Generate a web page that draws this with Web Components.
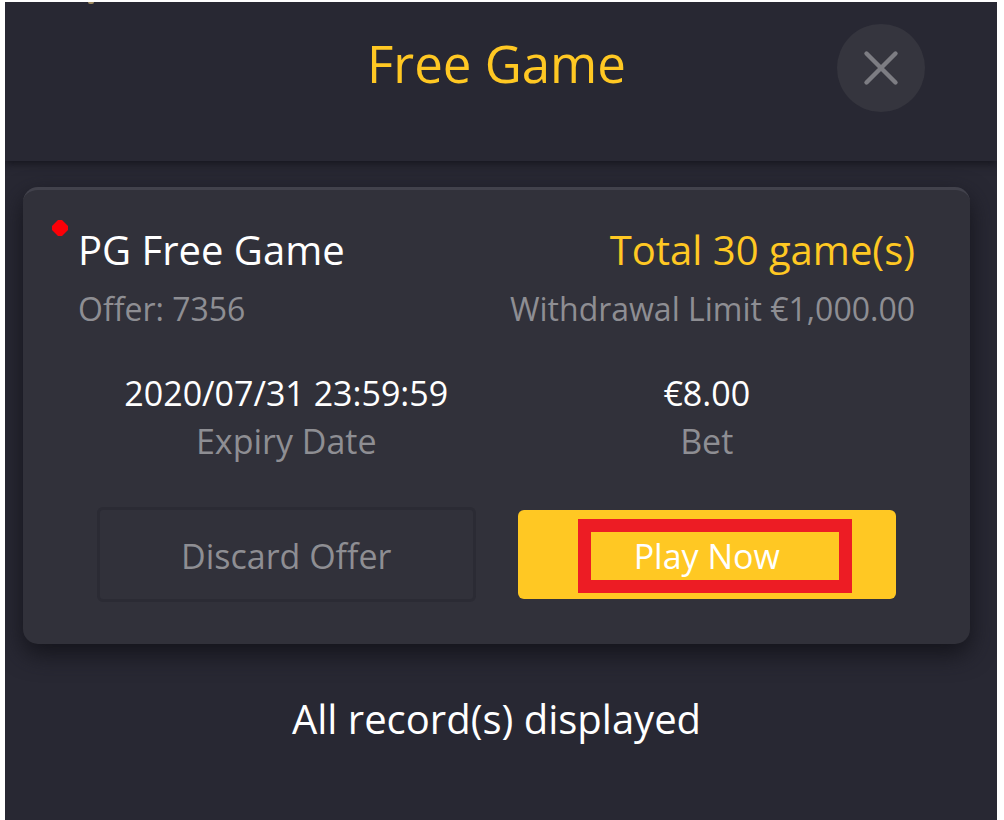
<!DOCTYPE html>
<html lang="en">
<head>
    <meta charset="utf-8">
    <title>Free Game</title>
    <style>
        html {
            height: 100%;
            background-color: #ffffff;
        }

        body {
            box-sizing: border-box;
            min-height: 100%;
            margin: 0;
            padding: 2px 7px 0 5px;
            display: flex;
            font-family: 'Open Sans', 'Noto Sans', sans-serif;
            color: #ffffff;
        }
    </style>
</head>
<body>
    <game-dialog>
        <dialog-header slot="header">Free Game</dialog-header>
        <offer-card>
            <span slot="name">PG Free Game</span>
            <span slot="total">Total 30 game(s)</span>
            <span slot="offer">Offer: 7356</span>
            <span slot="limit">Withdrawal Limit €1,000.00</span>
            <offer-stat slot="stats" label="Expiry Date">2020/07/31 23:59:59</offer-stat>
            <offer-stat slot="stats" label="Bet">€8.00</offer-stat>
            <offer-button slot="actions">Discard Offer</offer-button>
            <offer-button slot="actions" primary>Play Now</offer-button>
        </offer-card>
        <span slot="footer">All record(s) displayed</span>
    </game-dialog>

    <script>
        const dialogTemplate = `
            <style>
                :host {
                    flex: 1;
                    display: block;
                    position: relative;
                    overflow: hidden;
                    background-color: #282833;
                }

                /* tail of the page that sits behind the dialog */
                .behind {
                    position: absolute;
                    top: 0;
                    left: 83px;
                    width: 6px;
                    height: 2px;
                    background-color: #a08c62;
                    border-radius: 0 0 3px 3px;
                }

                main {
                    padding: 26px 27px 40px 18px;
                }

                p {
                    margin: 45px 0 0;
                    font-size: 40px;
                    line-height: 60px;
                    text-align: center;
                }
            </style>
            <slot name="header"></slot>
            <div class="behind"></div>
            <main>
                <slot></slot>
                <p><slot name="footer"></slot></p>
            </main>`;

        const headerTemplate = `
            <style>
                :host {
                    display: block;
                    box-shadow: 0 3px 8px #16161e;
                }

                header {
                    display: grid;
                    grid-template-columns: 1fr auto 1fr;
                    align-items: start;
                    padding: 22px 72px 49px 63px;
                }

                h1 {
                    grid-column: 2;
                    margin: 0;
                    font-size: 51px;
                    font-weight: 400;
                    line-height: 78px;
                    color: #ffc823;
                }

                button {
                    justify-self: end;
                    width: 88px;
                    height: 88px;
                    padding: 0;
                    border: 0;
                    border-radius: 50%;
                    background-color: #35353e;
                    cursor: pointer;
                }

                svg {
                    display: block;
                    margin: auto;
                }
            </style>
            <header>
                <h1><slot></slot></h1>
                <button type="button" aria-label="Close">
                    <svg width="40" height="40" viewBox="0 0 40 40" fill="none" stroke="#7d7d83" stroke-width="4.4" stroke-linecap="round">
                        <path d="M5.5 5.5L34.5 34.5M34.5 5.5L5.5 34.5"/>
                    </svg>
                </button>
            </header>`;

        const cardTemplate = `
            <style>
                :host {
                    display: block;
                    position: relative;
                    padding: 32px 0 42px;
                    border-top: 3px solid #42424c;
                    border-radius: 15px;
                    background-color: #31313a;
                    box-shadow: 0 10px 24px #14141b;
                }

                .dot {
                    position: absolute;
                    top: 29px;
                    left: 28px;
                }

                .row {
                    display: flex;
                    justify-content: space-between;
                    padding: 0 55px;
                }

                .title {
                    font-size: 40px;
                    line-height: 56px;
                }

                .total {
                    color: #ffc823;
                }

                .sub {
                    font-size: 32px;
                    line-height: 62px;
                    color: #8e8e93;
                }

                .columns {
                    display: grid;
                    grid-template-columns: 1fr 1fr;
                    column-gap: 42px;
                    align-items: center;
                    padding: 0 74px;
                }

                .stats {
                    margin: 29px 0 42px;
                }
            </style>
            <svg class="dot" width="18" height="18" viewBox="0 0 18 18">
                <path d="M7 1H11L17 7V11L11 17H7L1 11V7Z" fill="#fb0007"/>
            </svg>
            <div class="row title">
                <slot name="name"></slot>
                <span class="total"><slot name="total"></slot></span>
            </div>
            <div class="row sub">
                <slot name="offer"></slot>
                <slot name="limit"></slot>
            </div>
            <div class="columns stats"><slot name="stats"></slot></div>
            <div class="columns"><slot name="actions"></slot></div>`;

        const statTemplate = `
            <style>
                :host {
                    display: block;
                    font-size: 34px;
                    line-height: 48px;
                    text-align: center;
                    white-space: nowrap;
                }

                .label {
                    color: #8e8e93;
                }
            </style>
            <div><slot></slot></div>
            <div class="label"></div>`;

        const buttonTemplate = `
            <style>
                :host {
                    display: block;
                    position: relative;
                }

                button {
                    box-sizing: border-box;
                    width: 100%;
                    padding: 22px 20px 18px;
                    border: 3px solid #2b2b34;
                    border-radius: 6px;
                    background-color: transparent;
                    font: inherit;
                    font-size: 34px;
                    line-height: 49px;
                    color: #8e8e93;
                    cursor: pointer;
                }

                :host([primary]) button {
                    border: 0;
                    background-color: #ffc823;
                    color: #ffffff;
                }

                .highlight {
                    display: none;
                    position: absolute;
                    top: 9px;
                    right: 44px;
                    bottom: 6px;
                    left: 60px;
                    border: 13px solid #ed1c24;
                    pointer-events: none;
                }

                :host([primary]) .highlight {
                    display: block;
                }
            </style>
            <button type="button"><slot></slot></button>
            <div class="highlight"></div>`;

        class GameDialog extends HTMLElement {
            constructor() {
                super();
                this.attachShadow({ mode: 'open' }).innerHTML = dialogTemplate;
            }
        }

        class DialogHeader extends HTMLElement {
            constructor() {
                super();
                this.attachShadow({ mode: 'open' }).innerHTML = headerTemplate;
            }
        }

        class OfferCard extends HTMLElement {
            constructor() {
                super();
                this.attachShadow({ mode: 'open' }).innerHTML = cardTemplate;
            }
        }

        class OfferStat extends HTMLElement {
            constructor() {
                super();
                const shadowRoot = this.attachShadow({ mode: 'open' });
                shadowRoot.innerHTML = statTemplate;
                shadowRoot.querySelector('.label').textContent = this.getAttribute('label');
            }
        }

        class OfferButton extends HTMLElement {
            constructor() {
                super();
                this.attachShadow({ mode: 'open' }).innerHTML = buttonTemplate;
            }
        }

        customElements.define('game-dialog', GameDialog);
        customElements.define('dialog-header', DialogHeader);
        customElements.define('offer-card', OfferCard);
        customElements.define('offer-stat', OfferStat);
        customElements.define('offer-button', OfferButton);
    </script>
</body>
</html>
